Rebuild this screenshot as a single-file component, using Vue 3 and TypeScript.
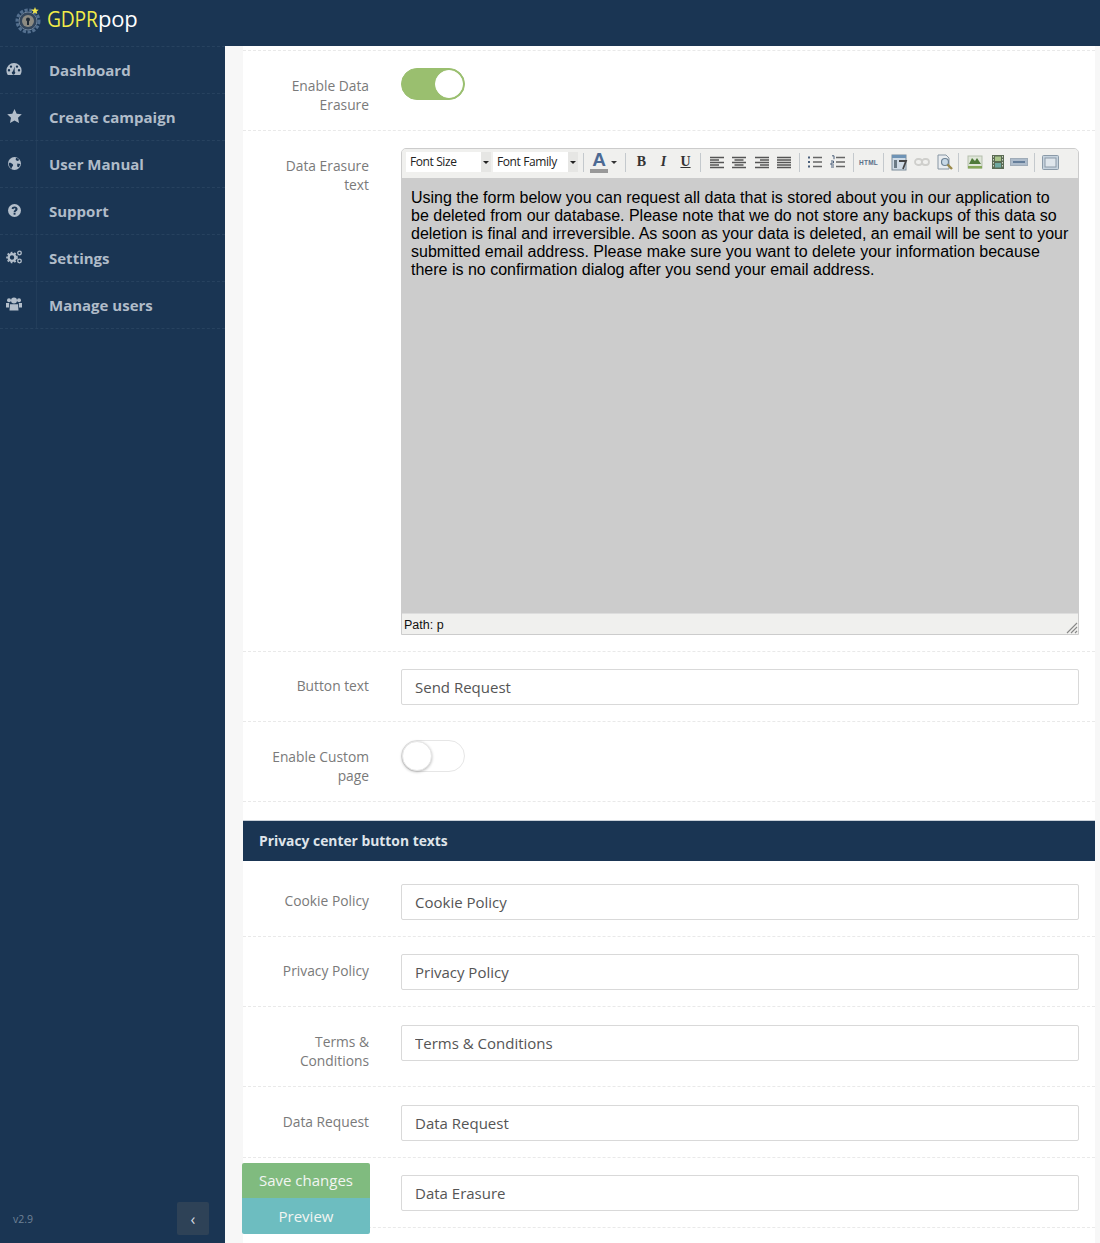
<script setup lang="ts">
const nav = [
  { label: 'Dashboard', icon: 'dash' },
  { label: 'Create campaign', icon: 'star' },
  { label: 'User Manual', icon: 'globe' },
  { label: 'Support', icon: 'help' },
  { label: 'Settings', icon: 'cogs' },
  { label: 'Manage users', icon: 'users' },
]
const privacy = [
  { label: 'Cookie Policy', value: 'Cookie Policy', cls: 'r-one' },
  { label: 'Privacy Policy', value: 'Privacy Policy', cls: 'r-one' },
  { label: 'Terms & Conditions', value: 'Terms & Conditions', cls: 'r-two' },
  { label: 'Data Request', value: 'Data Request', cls: 'r-one r-tall' },
  { label: 'Data Erasure', value: 'Data Erasure', cls: 'r-one', hide: true },
]
</script>

<template>
  <div class="page">
    <header class="top">
      <svg class="logo" width="30" height="30" viewBox="0 0 30 30">
        <circle cx="14" cy="16" r="11" fill="none" stroke="#54708f" stroke-width="3" stroke-dasharray="3.2 1.6" />
        <circle cx="14" cy="16" r="9" fill="#33465c" stroke="#6f849b" stroke-width="1" />
        <circle cx="14" cy="16" r="6" fill="#8d8b82" />
        <circle cx="14" cy="14.5" r="2" fill="#1f2a36" />
        <rect x="13" y="15" width="2" height="5" fill="#1f2a36" />
        <path d="M21 2l1 2.500 2.700.2-2.100 1.700.7 2.600-2.300-1.400-2.300 1.400.7-2.600-2.100-1.700 2.700-.2z" fill="#f4e84a" />
      </svg>
      <span class="brand"><span class="y">GDPR</span>pop</span>
    </header>
    <div class="main">
      <aside class="side">
        <ul class="menu">
          <li v-for="n in nav" :key="n.label" class="item">
            <span class="ico">
              <svg v-if="n.icon === 'dash'" width="16" height="14" viewBox="0 0 16 14"><path fill-rule="evenodd" d="M8 1a7.600 7.600 0 0 1 7.600 7.600c0 1.700-.5 3.200-1.400 4.400H1.800A7.400 7.400 0 0 1 .4 8.600 7.600 7.600 0 0 1 8 1zM3 7a1.200 1.200 0 1 0 0 2.400A1.200 1.200 0 0 0 3 7zm10 0a1.200 1.200 0 1 0 0 2.400A1.200 1.200 0 0 0 13 7zM5 3.400a1.200 1.200 0 1 0 0 2.400 1.200 1.200 0 0 0 0-2.400zm6 0a1.200 1.200 0 1 0 0 2.400 1.200 1.200 0 0 0 0-2.400zM8.600 4.500 7 9.200a1.700 1.700 0 1 0 1.700.4z" fill="#b4bfcb"/></svg>
              <svg v-else-if="n.icon === 'star'" width="15" height="14" viewBox="0 0 15 14"><path d="M7.500 0l2.200 4.700 5.100.6-3.800 3.500 1 5.100-4.500-2.500-4.500 2.500 1-5.100L.2 5.300l5.100-.6z" fill="#b4bfcb"/></svg>
              <svg v-else-if="n.icon === 'globe'" width="13" height="13" viewBox="0 0 13 13"><circle cx="6.500" cy="6.500" r="6.500" fill="#b4bfcb"/><path d="M.8 6c1.500-.8 2.600 0 3.700 1s.6 1.800-.1 2.400-.6 2-.9 2.300C2 10.700.7 8.800.8 6zM8 .8l2.500 1 .6 1.500-1.700.6-1.700-.8zM9.300 6.500l3 .5-1.400 3.300-1.800-.8z" fill="#1a3553"/></svg>
              <svg v-else-if="n.icon === 'help'" width="13" height="13" viewBox="0 0 13 13"><circle cx="6.500" cy="6.500" r="6.500" fill="#b4bfcb"/><path d="M3.600 4.800C3.800 3.200 5 2.400 6.600 2.400c1.700 0 3 1 3 2.500 0 2-2.100 2-2.100 3.300H5.600c0-2.200 1.900-2.200 1.900-3.200 0-.5-.4-.8-1-.8s-1 .4-1.100 1z" fill="#1a3553"/><rect x="5.600" y="8.900" width="1.900" height="1.800" fill="#1a3553"/></svg>
              <svg v-else-if="n.icon === 'cogs'" width="17" height="14" viewBox="0 0 17 14"><circle cx="6" cy="7.500" r="3.400" fill="none" stroke="#b4bfcb" stroke-width="2.400"/><circle cx="6" cy="7.500" r="5" fill="none" stroke="#b4bfcb" stroke-width="1.600" stroke-dasharray="1.800 1.800"/><circle cx="13.500" cy="3" r="1.800" fill="none" stroke="#b4bfcb" stroke-width="1.300"/><circle cx="13.500" cy="11" r="1.800" fill="none" stroke="#b4bfcb" stroke-width="1.300"/></svg>
              <svg v-else width="16" height="14" viewBox="0 0 16 14"><circle cx="3" cy="3.200" r="2" fill="#b4bfcb"/><circle cx="13" cy="3.200" r="2" fill="#b4bfcb"/><circle cx="8" cy="3.500" r="3" fill="#b4bfcb"/><path d="M0 6h3.200L3 10.500H0zM16 6h-3.200l.2 4.500h3zM4 7.200h8l.5 6.300h-9z" fill="#b4bfcb"/></svg>
            </span>
            <span class="label">{{ n.label }}</span>
          </li>
        </ul>
        <div class="side-foot">
          <span class="ver">v2.9</span>
          <button class="collapse" type="button">‹</button>
        </div>
      </aside>

      <section class="content">
        <div class="panel">
          <div class="row r-switch r-first">
            <div class="lab">Enable Data<br />Erasure</div>
            <div class="fld"><span class="sw on"><i></i></span></div>
          </div>

          <div class="row r-editor">
            <div class="lab">Data Erasure<br />text</div>
            <div class="fld">
              <div class="editor">
                <div class="bar">
                  <span class="sel"><b>Font Size</b><em></em></span>
                  <span class="sel m2"><b>Font Family</b><em></em></span>
                  <i class="sep m5"></i>
                  <span class="fc m6">A<u></u></span><em class="caret m3"></em>
                  <i class="sep m8"></i>
                  <span class="tb m7 bold">B</span>
                  <span class="tb m5 ital">I</span>
                  <span class="tb m5 under">U</span>
                  <i class="sep m6"></i>
                  <svg class="m8" width="16" height="13" viewBox="0 0 16 13"><path d="M1 1.500h14M1 4h9M1 6.500h14M1 9h9M1 11.500h14" stroke="#555" stroke-width="1.700"/></svg>
                  <svg class="m6" width="16" height="13" viewBox="0 0 16 13"><path d="M1 1.500h14M3.500 4h9M1 6.500h14M3.500 9h9M1 11.500h14" stroke="#555" stroke-width="1.700"/></svg>
                  <svg class="m7" width="16" height="13" viewBox="0 0 16 13"><path d="M1 1.500h14M6 4h9M1 6.500h14M6 9h9M1 11.500h14" stroke="#555" stroke-width="1.700"/></svg>
                  <svg class="m6" width="16" height="13" viewBox="0 0 16 13"><path d="M1 1.500h14M1 4h14M1 6.500h14M1 9h14M1 11.500h14" stroke="#555" stroke-width="1.700"/></svg>
                  <i class="sep m7"></i>
                  <svg class="m7" width="16" height="14" viewBox="0 0 16 14"><path d="M6 2.500h9M6 7h9M6 11.500h9" stroke="#666" stroke-width="1.300"/><path d="M1 2.500h3M1 7h3M1 11.500h3" stroke="#4a5f7a" stroke-width="2" stroke-dasharray="2 1"/></svg>
                  <svg class="m7" width="16" height="14" viewBox="0 0 16 14"><path d="M6 2.500h9M6 7h9M6 11.500h9" stroke="#666" stroke-width="1.300"/><path d="M2 .8h2v3.400M1 6h2.500v2H1v2h3M1 12h3" stroke="#4a5f7a" stroke-width="1" fill="none"/></svg>
                  <i class="sep m7"></i>
                  <span class="html m4">HTML</span>
                  <i class="sep m4"></i>
                  <svg class="m7" width="18" height="17" viewBox="0 0 18 17"><rect x="1" y="1" width="14" height="15" fill="#cfdbe6" stroke="#7b8b99"/><rect x="1" y="1" width="14" height="3" fill="#6e93b5"/><path d="M3 6h3v8H3z" fill="#6a7a86"/><path d="M8 7h7l-3 8" stroke="#444" stroke-width="1.800" fill="none"/></svg>
                  <svg class="m5" width="16" height="10" viewBox="0 0 16 10"><rect x="1" y="2" width="7" height="6" rx="3" fill="none" stroke="#cfcfcc" stroke-width="1.800"/><rect x="8" y="2" width="7" height="6" rx="3" fill="none" stroke="#cfcfcc" stroke-width="1.800"/></svg>
                  <svg class="m6" width="18" height="17" viewBox="0 0 18 17"><path d="M2 1h8l3 3v11H2z" fill="#e9edf0" stroke="#8796a3"/><circle cx="9" cy="8" r="3.500" fill="#c6d8e6" stroke="#6d8294" stroke-width="1.200"/><path d="M11.500 10.500l4.500 4.500" stroke="#9b8a4a" stroke-width="2.400"/></svg>
                  <i class="sep m4"></i>
                  <svg class="m8" width="16" height="16" viewBox="0 0 16 16"><rect x="1" y="2" width="14" height="12" fill="#dfe6d8" stroke="#b5bfae"/><path d="M2 10l3-6 3 3 2-3 4 6z" fill="#4f7a3a"/><rect x="1" y="12" width="14" height="2.500" fill="#86a85a"/></svg>
                  <svg class="m8" width="14" height="16" viewBox="0 0 14 16"><rect x="1" y="1" width="12" height="14" fill="#5b6b54"/><rect x="4" y="2.500" width="6" height="4.500" fill="#a8c48a"/><rect x="4" y="9" width="6" height="4.500" fill="#6fa8a0"/><path d="M2.500 2v12M11.500 2v12" stroke="#cfd6c8" stroke-width="1" stroke-dasharray="1.500 1.500"/></svg>
                  <svg class="m5" width="18" height="8" viewBox="0 0 18 8"><rect x=".5" y=".5" width="17" height="7" fill="#aebccb" stroke="#a0acb8"/><path d="M3 4h12" stroke="#4d6a8a" stroke-width="1.600"/></svg>
                  <i class="sep m6"></i>
                  <svg class="m7" width="17" height="15" viewBox="0 0 17 15"><rect x=".5" y=".5" width="16" height="14" rx="1" fill="#c6d3de" stroke="#8b9aa8"/><rect x="3" y="3" width="11" height="9" fill="#dfe6ec" stroke="#8b9aa8"/></svg>
                </div>
                <div class="body">Using the form below you can request all data that is stored about you in our application to be deleted from our database. Please note that we do not store any backups of this data so deletion is final and irreversible. As soon as your data is deleted, an email will be sent to your submitted email address. Please make sure you want to delete your information because there is no confirmation dialog after you send your email address.</div>
                <div class="path">Path: p
                  <svg class="grip" width="12" height="12" viewBox="0 0 12 12"><path d="M11 1L1 11M11 5l-6 6M11 9l-2 2" stroke="#888" stroke-width="1.100"/></svg>
                </div>
              </div>
            </div>
          </div>

          <div class="row r-one">
            <div class="lab">Button text</div>
            <div class="fld"><input class="inp" value="Send Request" /></div>
          </div>

          <div class="row r-switch r-custom">
            <div class="lab">Enable Custom<br />page</div>
            <div class="fld"><span class="sw"><i></i></span></div>
          </div>

          <h3 class="head">Privacy center button texts</h3>

          <div v-for="p in privacy" :key="p.label" class="row" :class="p.cls">
            <div class="lab" :class="{ ghost: p.hide }">{{ p.label }}</div>
            <div class="fld"><input class="inp" :value="p.value" /></div>
          </div>
        </div>

        <div class="actions">
          <button class="save" type="button">Save changes</button>
          <button class="prev" type="button">Preview</button>
        </div>
      </section>
    </div>
  </div>
</template>

<style>
html, body { margin: 0; overflow: hidden; }
</style>

<style scoped>
.page { width: 1100px; height: 1243px; overflow: hidden; display: flex; flex-direction: column; font-family: "Open Sans", sans-serif; background: #f7f7f7; }
.top { height: 46px; flex: none; background: #1a3553; display: flex; align-items: center; padding-left: 14px; box-sizing: border-box; }
.logo { margin-top: -6px; margin-right: 3px; }
.brand { font-size: 22px; line-height: 1; color: #fff; margin-top: -11px; letter-spacing: -.2px; white-space: nowrap; }
.y { color: #f3ec48; display: inline-block; transform: scaleX(.875); transform-origin: left; margin-right: -7px; }
.main { flex: 1; display: flex; min-height: 0; }
.side { width: 225px; flex: none; background: #1a3553; display: flex; flex-direction: column; justify-content: space-between; }
.menu { list-style: none; margin: 0; padding: 0; border-top: 1px dashed #27425f; }
.item { height: 47px; box-sizing: border-box; border-bottom: 1px dashed #27425f; display: flex; align-items: stretch; }
.ico { width: 37px; flex: none; box-sizing: border-box; border-right: 1px solid #223d5a; display: flex; align-items: center; justify-content: center; padding: 0 8px 2px 0; }
.label { padding-left: 12px; font-size: 15px; font-weight: 700; color: #b0bcc9; line-height: 46px; }
.side-foot { display: flex; align-items: center; justify-content: space-between; padding: 0 16px 8px 13px; height: 33px; }
.ver { font-size: 10.500px; color: #6f8296; }
.collapse { width: 32px; height: 33px; border: 0; border-radius: 2px; background: #2e4257; color: #d5dbe1; font-size: 16px; line-height: 28px; padding: 0; font-family: "Open Sans", sans-serif; }

.content { flex: 1; position: relative; padding-left: 18px; padding-right: 5px; min-width: 0; background: #f7f7f7; }
.panel { background: #fff; height: 100%; box-sizing: border-box; padding-top: 4px; }
.row { display: flex; border-bottom: 1px dashed #e9e9e9; box-sizing: border-box; }
.lab { width: 126px; flex: none; text-align: right; font-size: 13.800px; line-height: 19px; color: #7a7a7a; padding-top: 7px; }
.ghost { visibility: hidden; }
.fld { margin-left: 32px; width: 678px; flex: none; }
.r-first { height: 81px; padding-top: 17px; border-top: 1px dashed #e9e9e9; }
.r-first .lab { padding-top: 8px; }
.r-custom { height: 80px; padding-top: 18px; }
.sw { display: block; box-sizing: border-box; width: 64px; height: 32px; border-radius: 16px; background: #fff; border: 1px solid #e6e6e6; position: relative; }
.sw i { position: absolute; left: 0; top: 0; box-sizing: border-box; width: 30px; height: 30px; background: #fff; border-radius: 50%; border: 1px solid #e6e6e6; box-shadow: 0 1px 3px rgba(0, 0, 0, .28); }
.sw.on { background: #9abf6f; border-color: #9abf6f; }
.sw.on i { left: 33px; top: 1px; width: 28px; height: 28px; border-color: #fff; box-shadow: none; }
.r-editor { height: 521px; padding-top: 17px; }
.r-editor .lab { padding-top: 8px; }
.editor { width: 678px; height: 487px; box-sizing: border-box; border: 1px solid #ccc; border-radius: 5px 5px 0 0; display: flex; flex-direction: column; overflow: hidden; font-family: "Liberation Sans", sans-serif; background: #f0f0ee; }
.bar { height: 29px; flex: none; display: flex; align-items: center; padding: 0 0 3px 4px; box-sizing: border-box; background: #f0f0ee; }
.m2 { margin-left: 2px; }
.m3 { margin-left: 3px; }
.m4 { margin-left: 4px; }
.m5 { margin-left: 5px; }
.m6 { margin-left: 6px; }
.m7 { margin-left: 7px; }
.m8 { margin-left: 8px; }
.bar svg { flex: none; }
.sel { display: block; width: 85px; height: 20px; background: #fff; flex: none; position: relative; box-sizing: border-box; }
.sel b { font-weight: 400; font-size: 12px; line-height: 20px; color: #222; padding-left: 4px; font-family: "Open Sans", sans-serif; letter-spacing: -.4px; }
.sel em { position: absolute; right: 0; top: 0; width: 10px; height: 20px; background: #e6e6e4; }
.sel em::after { content: ""; position: absolute; left: 2px; top: 9px; border: 3px solid transparent; border-top: 3px solid #222; }
.sep { width: 1px; height: 19px; background: #c4c9cd; flex: none; }
.fc { font-family: "Liberation Sans", sans-serif; font-size: 19px; font-weight: 700; color: #4c6a94; width: 18px; text-align: center; line-height: 18px; position: relative; height: 22px; flex: none; }
.fc u { position: absolute; left: 0; bottom: 0; height: 4px; width: 100%; background: #999; }
.caret { border: 3.500px solid transparent; border-top: 3.500px solid #333; margin-top: 3px; width: 0; height: 0; flex: none; }
.tb { font-family: "Liberation Serif", serif; font-size: 14px; font-weight: 700; color: #333; width: 17px; text-align: center; flex: none; }
.ital { font-style: italic; }
.under { text-decoration: underline; }
.html { font-size: 6.500px; font-weight: 700; color: #5a6f88; letter-spacing: .2px; width: 21px; text-align: center; font-family: "Liberation Sans", sans-serif; flex: none; }
.body { flex: 1; background: #ccc; padding: 11px 8px 0 9px; font-size: 16px; line-height: 18px; color: #000; }
.path { height: 21px; flex: none; position: relative; padding-left: 2px; font-size: 12.500px; line-height: 22px; color: #111; background: #f0f0ee; border-top: 1px solid #ddd; box-sizing: border-box; }
.grip { position: absolute; right: 0; bottom: 0; }
.r-one { height: 70px; padding-top: 17px; }
.r-two { height: 80px; padding-top: 18px; }
.r-tall { height: 71px; padding-top: 18px; }
.inp { width: 678px; height: 36px; box-sizing: border-box; border: 1px solid #d9d9d9; border-radius: 2px; padding: 0 13px; font-size: 15px; color: #555; font-family: "Open Sans", sans-serif; background: #fff; outline: none; display: block; }
.head { margin: 18px 0 0; height: 41px; background: #1a3553; color: #dfe4ea; font-size: 13.850px; font-weight: 700; line-height: 39px; padding-left: 16px; box-sizing: border-box; border-top: 1px solid #c9d0d8; }
.head + .row { height: 76px; padding-top: 23px; }
.actions { position: absolute; left: 17px; top: 1117px; width: 128px; display: flex; flex-direction: column; }
.actions button { width: 128px; border: 0; padding: 0; color: #f2f5f2; font-size: 15px; font-family: "Open Sans", sans-serif; display: block; }
.actions .save { height: 35px; background: #80bb7f; border-radius: 2px 2px 0 0; padding-bottom: 2px; }
.prev { height: 36px; background: #6dbdc0; border-radius: 0 0 2px 2px; }
</style>
